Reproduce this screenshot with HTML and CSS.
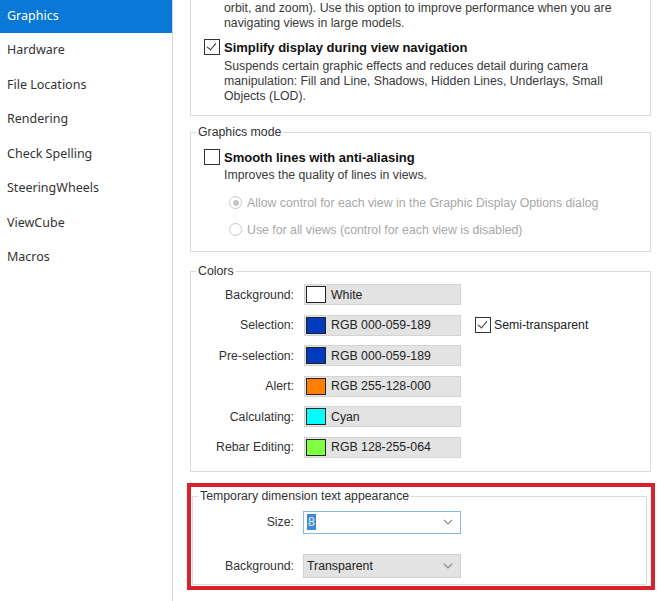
FILE: index.html
```html
<!DOCTYPE html>
<html>
<head>
    <meta charset="UTF-8">
    <title>Options - Graphics</title>
    <link rel="stylesheet" href="styles.css">
</head>
<body>
    <div class="window">
        <nav class="sidebar">
            <ul>
                <li class="active">Graphics</li>
                <li>Hardware</li>
                <li>File Locations</li>
                <li>Rendering</li>
                <li>Check Spelling</li>
                <li>SteeringWheels</li>
                <li>ViewCube</li>
                <li>Macros</li>
            </ul>
        </nav>

        <main class="panel">
            <!-- view navigation (scrolled, top border out of view) -->
            <section class="group group-top">
                <p class="desc">orbit, and zoom). Use this option to improve performance when you are</p>
                <p class="desc">navigating views in large models.</p>
                <label class="check-row">
                    <span class="check checked"></span>
                    <b>Simplify display during view navigation</b>
                </label>
                <div class="desc-block">
                    <p class="desc">Suspends certain graphic effects and reduces detail during camera</p>
                    <p class="desc">manipulation: Fill and Line, Shadows, Hidden Lines, Underlays, Small</p>
                    <p class="desc">Objects (LOD).</p>
                </div>
            </section>

            <fieldset class="group group-mode">
                <legend>Graphics mode</legend>
                <label class="check-row">
                    <span class="check"></span>
                    <b>Smooth lines with anti-aliasing</b>
                </label>
                <p class="desc improves">Improves the quality of lines in views.</p>
                <label class="radio-row disabled">
                    <span class="radio on"></span>
                    Allow control for each view in the Graphic Display Options dialog
                </label>
                <label class="radio-row disabled">
                    <span class="radio"></span>
                    Use for all views (control for each view is disabled)
                </label>
            </fieldset>

            <fieldset class="group group-colors">
                <legend>Colors</legend>
                <div class="color-row">
                    <span class="label">Background:</span>
                    <span class="color-btn"><span class="swatch" style="background:#ffffff"></span>White</span>
                </div>
                <div class="color-row">
                    <span class="label">Selection:</span>
                    <span class="color-btn"><span class="swatch" style="background:#003bbd"></span>RGB 000-059-189</span>
                    <label class="semi">
                        <span class="check checked"></span>
                        Semi-transparent
                    </label>
                </div>
                <div class="color-row">
                    <span class="label">Pre-selection:</span>
                    <span class="color-btn"><span class="swatch" style="background:#003bbd"></span>RGB 000-059-189</span>
                </div>
                <div class="color-row">
                    <span class="label">Alert:</span>
                    <span class="color-btn"><span class="swatch" style="background:#ff8000"></span>RGB 255-128-000</span>
                </div>
                <div class="color-row">
                    <span class="label">Calculating:</span>
                    <span class="color-btn"><span class="swatch" style="background:#00ffff"></span>Cyan</span>
                </div>
                <div class="color-row">
                    <span class="label">Rebar Editing:</span>
                    <span class="color-btn"><span class="swatch" style="background:#80ff40"></span>RGB 128-255-064</span>
                </div>
            </fieldset>

            <div class="highlight">
                <fieldset class="group group-dim">
                    <legend>Temporary dimension text appearance</legend>
                    <div class="combo-row">
                        <span class="label">Size:</span>
                        <span class="combo focus">
                            <span class="value"><span class="sel">8</span></span>
                            <svg class="chev" width="10" height="6" viewBox="0 0 10 6"><polyline points="1,1 5,5 9,1" fill="none" stroke="#8a8a8a" stroke-width="1.1"/></svg>
                        </span>
                    </div>
                    <div class="combo-row">
                        <span class="label">Background:</span>
                        <span class="combo grey">
                            <span class="value">Transparent</span>
                            <svg class="chev" width="10" height="6" viewBox="0 0 10 6"><polyline points="1,1 5,5 9,1" fill="none" stroke="#8a8a8a" stroke-width="1.1"/></svg>
                        </span>
                    </div>
                </fieldset>
            </div>
        </main>
    </div>
</body>
</html>
```

FILE: styles.css
```css
html {
    font-family: "Liberation Sans", Arial, sans-serif;
    font-size: 12.3px;
    color: #222;
}

body {
    margin: 0;
    background: #fff;
    overflow: hidden;
}

p {
    margin: 0;
}

b {
    font-size: 13px;
}

.window {
    display: flex;
    height: 601px;
}

/* left category list */
.sidebar {
    width: 172px;
    flex: none;
    border-right: 1px solid #d2d2d2;
    font-family: "Noto Sans", sans-serif;
    font-size: 12.5px;
    color: #333;
}

.sidebar ul {
    list-style: none;
    margin: -2px 0 0 0;
    padding: 0;
}

.sidebar li {
    height: 34.5px;
    display: flex;
    align-items: center;
    padding-left: 7px;
}

.sidebar li.active {
    background-color: #0a78d7;
    color: #fff;
}

/* right options panel */
.panel {
    flex: 1;
    padding-left: 17px;
}

.group {
    width: 459px;
    margin: 0;
    padding: 0;
    border: 1px solid #dcdcdc;
}

.group legend {
    margin-left: 5px;
    padding: 0 2px;
    line-height: 15px;
    color: #333;
}

.group-top {
    border-top: none;
    padding-top: 1px;
    padding-bottom: 11px;
}

.group-top > .desc {
    padding-left: 33px;
}

.desc {
    line-height: 15px;
    color: #3a3a3a;
}

.desc-block {
    margin-top: 4px;
    padding-left: 33px;
}

.check-row {
    display: flex;
    align-items: center;
    height: 16px;
    margin-top: 8px;
    padding-left: 13px;
}

.check-row b {
    margin-left: 4px;
    color: #111;
}

.check {
    width: 14px;
    height: 14px;
    border: 1px solid #333;
    background: #fff;
    flex: none;
    position: relative;
}

.check.checked::after {
    content: "";
    position: absolute;
    left: 4px;
    top: 1px;
    width: 4px;
    height: 8px;
    border-right: 1.3px solid #333;
    border-bottom: 1.3px solid #333;
    transform: rotate(40deg);
}

/* graphics mode */
.group-mode {
    margin-top: 9px;
    padding-bottom: 14px;
}

.group-mode .check-row {
    margin-top: 9px;
}

.group-mode .improves {
    margin-top: 3px;
    padding-left: 33px;
}

.radio-row {
    display: flex;
    align-items: center;
    height: 15px;
    margin-top: 12px;
    padding-left: 38px;
    color: #a8a8a8;
}

.radio {
    width: 11px;
    height: 11px;
    border: 1px solid #c8c8c8;
    border-radius: 50%;
    margin-right: 5px;
    position: relative;
    flex: none;
}

.radio.on::after {
    content: "";
    position: absolute;
    left: 2.5px;
    top: 2.5px;
    width: 6px;
    height: 6px;
    border-radius: 50%;
    background: #c4c4c4;
}

/* colors */
.group-colors {
    margin-top: 12px;
    padding-top: 5px;
    padding-bottom: 13px;
}

.color-row {
    display: flex;
    align-items: center;
    height: 21px;
    margin-bottom: 9.5px;
}

.color-row:last-child {
    margin-bottom: 0;
}

.label {
    width: 103px;
    text-align: right;
    margin-right: 10px;
    flex: none;
    color: #333;
}

.color-btn {
    width: 157px;
    height: 21px;
    box-sizing: border-box;
    display: flex;
    align-items: center;
    background: #e3e3e3;
    border: 1px solid #d3d3d3;
    color: #222;
}

.swatch {
    width: 18px;
    height: 15px;
    margin: 0 5px 0 1px;
    border: 1px solid #222;
    flex: none;
}

.semi {
    display: flex;
    align-items: center;
    margin-left: 14px;
    color: #222;
}

.semi .check {
    margin-right: 3px;
}

/* red call-out around the dimension text settings */
.highlight {
    width: 460px;
    margin: 11px 0 0 -3px;
    padding-bottom: 1px;
    border: 4px solid #d9202b;
}

.group-dim {
    width: 453px;
    margin: 2px 0 0 1px;
    padding-bottom: 6px;
}

.combo-row {
    display: flex;
    align-items: center;
    margin-top: 7px;
}

.combo-row + .combo-row {
    margin-top: 20px;
}

.group-dim .label {
    width: 101px;
    margin-right: 9px;
}

.combo {
    width: 158px;
    height: 24px;
    box-sizing: border-box;
    display: flex;
    align-items: center;
    justify-content: space-between;
    padding: 0 7px 0 3px;
}

.combo.focus {
    border: 1px solid #86b8e4;
    background: #fff;
    height: 23px;
}

.combo.grey {
    border: 1px solid #d0d0d0;
    background: #e3e3e3;
}

.combo .value {
    color: #222;
}

.combo .sel {
    background: #3c8ad6;
    color: #e8f1fb;
    padding: 1px 1px;
}
```
